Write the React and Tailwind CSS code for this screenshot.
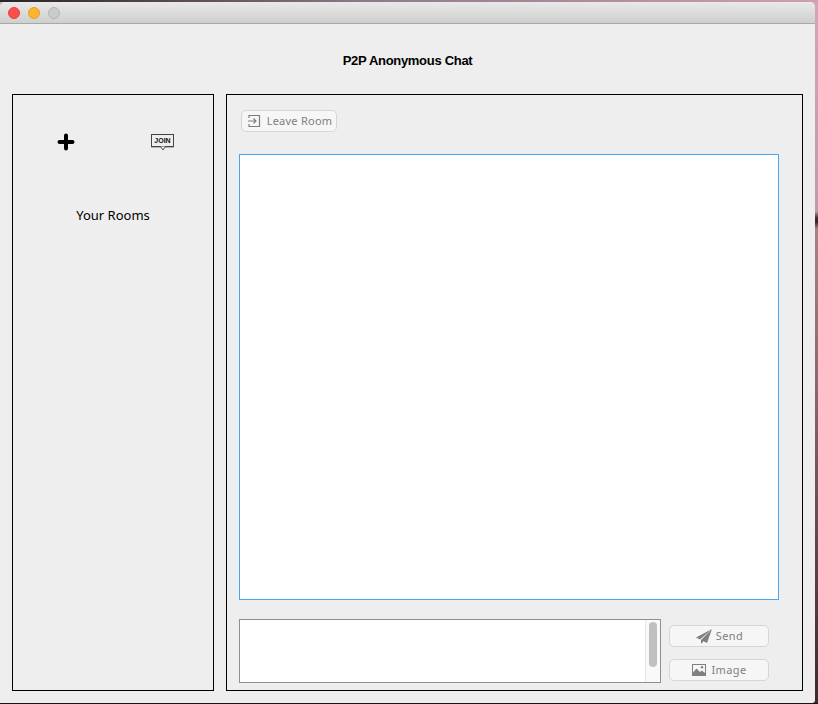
const uiFont = { fontFamily: '"Noto Sans", sans-serif' };

function LeaveIcon() {
  return (
    <svg width="14" height="14" viewBox="0 0 14 14" fill="none" stroke="#7d7d7d" strokeWidth="1.2">
      <path d="M2 4V1.5H12.5V12.5H2V10" />
      <path d="M1 7H9M6.5 4.5L9 7L6.5 9.5" />
    </svg>
  );
}

function JoinIcon() {
  return (
    <div className="relative flex h-[13px] w-[23px] items-center justify-center border border-[#444] bg-[#eeeeee] shadow-[0_1px_0_#b5b5b5]">
      <span className="text-[7px] leading-none font-bold text-[#111]" style={{ fontFamily: '"Liberation Sans", sans-serif' }}>
        JOIN
      </span>
      <svg className="absolute top-[11px] left-[8px]" width="6" height="5" viewBox="0 0 6 5">
        <path d="M0.5 0.5L3 4L5.5 0.5" fill="#eeeeee" stroke="#444" strokeWidth="0.9" />
      </svg>
    </div>
  );
}

function ActionButton({ icon, label, gap }) {
  return (
    <button
      type="button"
      className={`flex h-[22px] w-[100px] items-center justify-center rounded-[5px] border border-[#d6d6d6] bg-[#f6f6f6] text-[11px] tracking-[0.4px] text-[#808080] ${gap}`}
    >
      {icon}
      {label}
    </button>
  );
}

export default function App() {
  return (
    <div
      className="flex h-[704px] w-[818px] flex-col overflow-hidden"
      style={{
        background:
          "linear-gradient(180deg, #d3a5ba 0%, #c09aa8 30%, #3a2a2c 31%, #3a2a2c 31.6%, #a98088 32.5%, #8a6670 55%, #5c4048 80%, #3a2a30 100%)",
      }}
    >
      {/* Desktop behind the window */}
      <div className="h-[2px] shrink-0 bg-gradient-to-r from-[#2a2426] via-[#8f7a8a] via-45% to-[#cf9fb4]" />

      <div className="mr-[3px] flex h-[701px] shrink-0 flex-col overflow-hidden rounded-t-[5px] rounded-br-[3px] bg-[#eeeeee]">
        {/* Title bar */}
        <div className="flex h-[22px] shrink-0 items-center gap-2 border-b border-[#a9a9a9] bg-gradient-to-b from-[#e9e9e9] to-[#cfcfcf] pl-2">
          <span className="h-3 w-3 rounded-full border border-[#e0443e] bg-[#fc4c4c]" />
          <span className="h-3 w-3 rounded-full border border-[#dfa02c] bg-[#fdb52f]" />
          <span className="h-3 w-3 rounded-full border border-[#b4b4b4] bg-[#cbcbcb]" />
        </div>

        <div className="flex h-[70px] shrink-0 items-center justify-center pt-[3px]">
          <h1 className="text-[13px] font-bold tracking-[-0.3px] text-black" style={{ fontFamily: '"Liberation Sans", sans-serif' }}>
            P2P Anonymous Chat
          </h1>
        </div>

        <div className="flex h-[597px] gap-3 px-3">
          {/* Rooms */}
          <aside className="flex w-[202px] flex-col border border-black">
            <div className="flex h-[55px] items-end justify-between pr-[39px] pl-[44px]">
              <svg width="18" height="18" viewBox="0 0 18 18" className="mb-[-1px]">
                <path d="M9 2.5V15.5M2.5 9H15.5" stroke="#000" strokeWidth="4" strokeLinecap="round" />
              </svg>
              <div className="mb-[3px]">
                <JoinIcon />
              </div>
            </div>
            <p className="mt-[56px] text-center text-[13px] text-black" style={uiFont}>
              Your Rooms
            </p>
          </aside>

          {/* Chat */}
          <section className="flex w-[577px] flex-col border border-black pt-[15px] pr-[23px] pl-[12px]" style={uiFont}>
            <button
              type="button"
              className="ml-[2px] flex h-[22px] w-[96px] items-center justify-center gap-[6px] rounded-[5px] border border-[#d6d6d6] bg-[#f6f6f6] pl-[1px] text-[11px] tracking-[0.25px] text-[#808080]"
            >
              <LeaveIcon />
              Leave Room
            </button>

            <div className="mt-[22px] h-[446px] border border-[#4aa6ee] bg-white" />

            <div className="mt-[19px] flex gap-2">
              <div className="flex h-[64px] w-[422px] justify-end border border-[#8f8f8f] bg-white">
                <div className="h-full w-[15px] border-l border-[#e8e8e8] bg-[#f9f9f9] pt-[2px] pl-[3px]">
                  <div className="h-[45px] w-2 rounded bg-[#c0c0c0]" />
                </div>
              </div>
              <div className="flex flex-col gap-3 pt-[6px]">
                <ActionButton
                  label="Send"
                  gap="gap-1 pl-[1px]"
                  icon={
                    <svg width="16" height="15" viewBox="0 0 16 15" fill="#808080">
                      <path d="M16 0L0 8.5L4 10.5L16 0Z" />
                      <path d="M16 0L5 11V15L7.5 12.3L11 14L16 0Z" />
                    </svg>
                  }
                />
                <ActionButton
                  label="Image"
                  gap="gap-[5px] pl-[1px]"
                  icon={
                    <svg width="14" height="12" viewBox="0 0 14 12">
                      <rect x="0.5" y="0.5" width="13" height="11" fill="none" stroke="#808080" />
                      <path d="M1 11V8.5L4.5 4.5L8 8L9.8 6.5L13 9V11Z" fill="#808080" />
                      <circle cx="10" cy="3.2" r="1.2" fill="#808080" />
                    </svg>
                  }
                />
              </div>
            </div>
          </section>
        </div>
      </div>

      <div className="h-px shrink-0 bg-[#1a1416]" />
    </div>
  );
}
